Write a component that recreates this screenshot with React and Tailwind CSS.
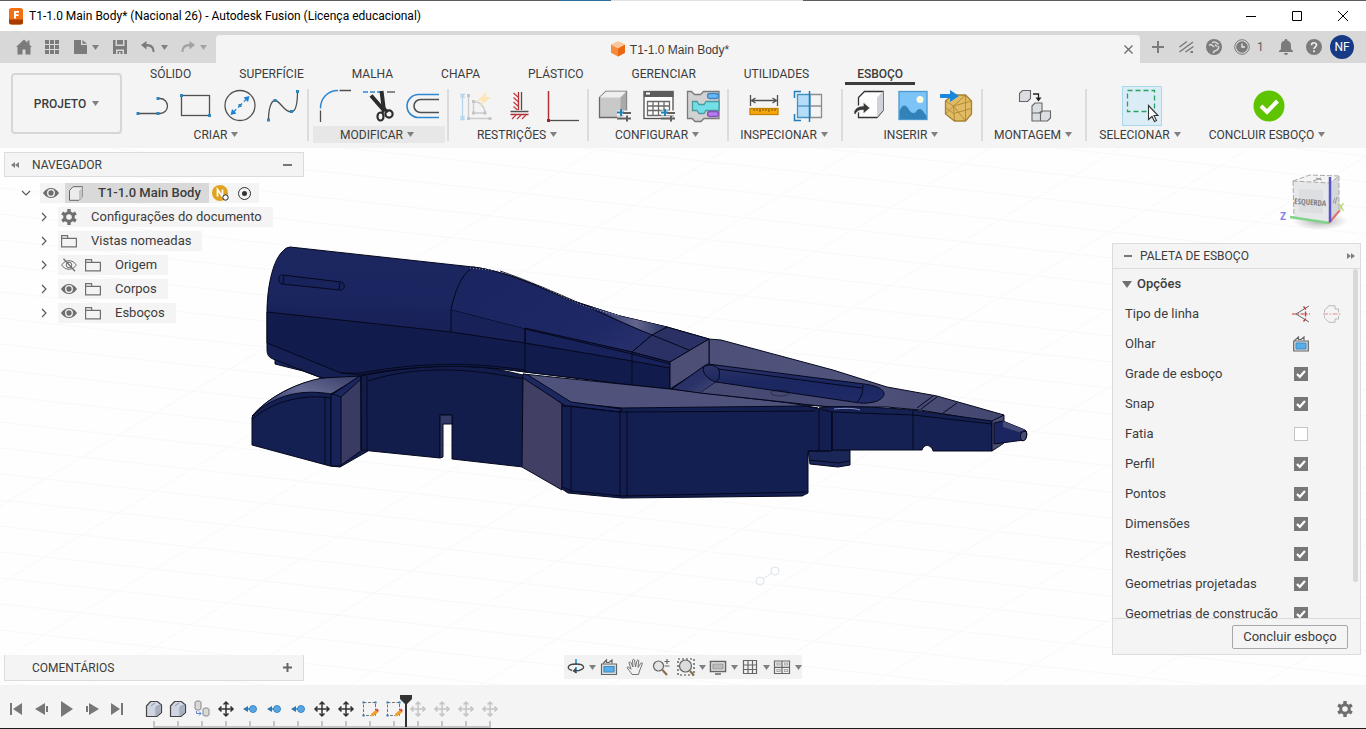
import { useState } from "react";

const Caret = ({ className = "text-[#808080]" }) => (
  <svg width="7" height="5" viewBox="0 0 7 5" className={`shrink-0 ${className}`}>
    <path d="M0 0h7L3.5 5z" fill="currentColor" />
  </svg>
);

const Dots = ({ at, color = "#2e86bd" }) =>
  at.map(([x, y]) => (
    <rect key={`${x}-${y}`} x={x - 1.5} y={y - 1.5} width="3" height="3" fill={color} />
  ));

const Tool = ({ children, size = 34 }) => (
  <svg width={size} height={size} viewBox="0 0 34 34" fill="none" stroke="#505050" strokeWidth="1.3">
    {children}
  </svg>
);

/* ---------- Ribbon icons ---------- */

const LineIcon = () => (
  <Tool>
    <path d="M2 24.500H24a7.500 7.500 0 0 0 0-15H22" />
    <g stroke="none"><Dots at={[[2, 24.5], [22, 24.5], [22, 9.5]]} /></g>
  </Tool>
);

const RectIcon = () => (
  <Tool>
    <rect x="2.500" y="6.500" width="28" height="20" />
    <g stroke="none"><Dots at={[[2.5, 6.5], [30.5, 26.5]]} /></g>
  </Tool>
);

const CircleIcon = () => (
  <Tool>
    <circle cx="17" cy="16.500" r="15" />
    <path d="M9 24.500 25 8.500" stroke="#1f82d8" strokeDasharray="6 2.600 5.600 2.600 6" />
    <path d="m7.500 26 1.500-6 4.500 4.500zM26.500 7l-6 1.500 4.500 4.500z" fill="#1f82d8" stroke="none" />
    <g stroke="none"><Dots at={[[17, 16.5]]} /></g>
  </Tool>
);

const SplineIcon = () => (
  <Tool>
    <path d="M2.500 31C2.500 20 5 11.500 9 11.500c5 0 9 11.500 16 11.500 5 0 6.500-10 6.500-20.500" />
    <g stroke="none"><Dots at={[[2.5, 31], [9, 11.5], [25.5, 22.5], [31.5, 2.5]]} /></g>
  </Tool>
);

const FilletIcon = () => (
  <Tool>
    <path d="M2.500 19.500C2.500 9 10 1.500 20 1.500" stroke="#2e86d0" strokeWidth="1.500" />
    <path d="M21.500 1.500H33M2.500 21.500V33" />
  </Tool>
);

const TrimIcon = () => (
  <Tool>
    <path d="M1 3h18" stroke="#2e86d0" strokeDasharray="5 2" />
    <path d="M25 3h8" />
    <path d="M9 6.500 22.500 22M19.500 2 22 22" stroke="#2c2c2c" strokeWidth="4" />
    <ellipse cx="18.500" cy="27.500" rx="3" ry="4" stroke="#2c2c2c" strokeWidth="2.200" />
    <ellipse cx="27" cy="25" rx="3.600" ry="3.600" stroke="#2c2c2c" strokeWidth="2.200" />
    <path d="m20 24 3-4 3 3" stroke="#2c2c2c" strokeWidth="2.500" />
  </Tool>
);

const OffsetIcon = () => (
  <Tool>
    <path d="M33 5.500H12.500a11.500 11.500 0 0 0 0 23H33" stroke="#2e86d0" strokeWidth="1.600" />
    <path d="M33 10.500H14.500a6.500 6.500 0 0 0 0 13H33" strokeWidth="1.600" />
  </Tool>
);

const AutoConstrainIcon = () => (
  <Tool>
    <g opacity=".38">
      <path d="M4.500 6v23M2 5.500h5M2 30.500h5M2.500 9l2-3 2 3M2.500 27l2 3 2-3" stroke="#4da6e8" />
      <path d="M10.500 6.500v23h22M15.500 12.500v11.500h11.500c0-6-5-11.500-11.500-11.500z" stroke="#8a8a8a" />
      <g stroke="none"><Dots color="#777" at={[[10.5, 6.5], [10.5, 29.5], [32, 29.5], [15.5, 12.5], [15.5, 24], [27, 24]]} /></g>
    </g>
    <path d="M29 2 19 12h6l-4 6 12-10h-6z" fill="#fbe6b4" stroke="none" />
  </Tool>
);

const HorizontalVerticalIcon = () => (
  <Tool>
    <path d="M19.500 3v18M8.500 22.500h18" stroke="#505050" />
    <path d="M16.500 3v18M8.500 25.500h18" stroke="#b03034" />
    <path d="m11.500 4 5 4.500m-5 0 5 4.500m-5 0 5 4.500m-5 0 4 3.500M10 30l4-4m1 4 4-4m1 4 4-4" stroke="#c03a3e" strokeWidth="1.200" />
  </Tool>
);

const CoincidentIcon = () => (
  <Tool>
    <path d="M2.500 2v28" stroke="#b03034" strokeWidth="1.500" />
    <path d="M4 31.500h29" />
    <rect x="1" y="30" width="3" height="3" fill="#a02529" stroke="none" />
  </Tool>
);

const PlusBars = ({ x = 19, y = 20 }) => (
  <g transform={`translate(${x} ${y})`} strokeWidth="2">
    <path d="M0 4h14M0 10h14" stroke="#f4f4f4" strokeWidth="5" />
    <path d="M6 4h8M0 9.500h14M10 6.500v6" stroke="#606060" />
    <path d="M0 3.500h7M4 0v7" stroke="#1f82b8" />
  </g>
);

const ConfigBodyIcon = () => (
  <Tool>
    <path d="M1.500 8.500 8 2.500h20.500v20l-6 6h-21z" fill="#c9c9c9" stroke="#6a6a6a" />
    <path d="M1.500 8.500 8 2.500h20.500l-6 6z" fill="#efefef" stroke="none" />
    <path d="m22.500 8.500 6-6v20l-6 6z" fill="#a9a9a9" stroke="none" />
    <PlusBars />
  </Tool>
);

const ConfigTableIcon = () => (
  <Tool>
    <rect x="2" y="2.500" width="29" height="27" fill="#fff" />
    <path d="M2 2h29.500v6H2z" fill="#5d5d5d" stroke="none" />
    <path d="M5.500 12.500h22v14h-22zM5.500 17h22M5.500 21.500h22M11 12.500v14M16.500 12.500v14M22 12.500v14" stroke="#6a6a6a" />
    <path d="M4 4.500h4" stroke="#fff" strokeWidth="2" />
    <PlusBars />
  </Tool>
);

const ConfigRuleIcon = () => (
  <Tool>
    <path d="M1.500 2.500h4l3 3h6l3-3H33v27H18l-3 3H9l-3-3H1.500z" fill="#d2d2d2" stroke="#7a7a7a" />
    <path d="M6.500 12.500H11l2 3h5l2-3h13v9H20l-2 3h-5l-2-3H6.500z" fill="#72dfe6" stroke="#4c9aa0" />
    <rect x="21.500" y="4.500" width="11" height="5" rx="2.500" fill="#69b8f5" stroke="#3f87c0" />
    <rect x="21.500" y="22.500" width="11" height="5" rx="2.500" fill="#b77bf0" stroke="#8550b8" />
  </Tool>
);

const MeasureIcon = () => (
  <Tool>
    <path d="M3.500 6v11M30.500 6v11M5 11.500h24M8.500 9l-4 2.500 4 2.500M25.500 9l4 2.500-4 2.500" />
    <rect x="3" y="19.500" width="28" height="6" fill="#f5a70d" stroke="#c98200" />
    <path d="M7 20v2m3-2v2m3-2v3m3-3v2m3-2v2m3-2v3m3-3v2m3-2v2" stroke="#7a5200" strokeWidth="1" />
  </Tool>
);

const SectionIcon = () => (
  <Tool>
    <path d="M6.500 5.500H19v23H6.500z" fill="#b5dcf8" stroke="#4593c4" />
    <path d="M6.500 17h12" stroke="#4593c4" />
    <path d="M19 5.500h11.500v23H19M19 17h11.500" stroke="#8d8d8d" />
    <path d="M18.500 2v31M10 2.500H3.500V9M10 31.500H3.500V25" stroke="#1f7cb8" strokeWidth="1.500" />
  </Tool>
);

const InsertDeriveIcon = () => (
  <Tool>
    <path d="m6.500 8.500 6-6H31v19l-6 7H6.500z" fill="#fdfdfd" stroke="#333" />
    <path d="m25 8.500 6-6v19l-6 7z" fill="#cfd2d8" stroke="none" />
    <path d="M1.500 24.500c0-5 4-8 9.500-8v-4l7.500 6.500-7.500 6.500v-4c-3.500 0-6 .5-7.500 5z" fill="#3a3a3a" stroke="#f4f4f4" />
  </Tool>
);

const CanvasIcon = () => (
  <Tool>
    <rect x="3" y="2.500" width="28" height="28" fill="#7cc4f8" stroke="#4a9bd0" />
    <path d="M3.500 22c3-7 6-7 9-2 2 3 3 4 5 4 3 0 3-4 6-4s4 3 7 7v3H3.500z" fill="#3282b8" stroke="none" />
    <circle cx="24" cy="10.500" r="3.500" fill="#fffbe0" stroke="none" />
  </Tool>
);

const InsertMeshIcon = () => (
  <Tool>
    <path d="m5.500 12 7-6h13l6 6v13l-6 7h-11l-9-7z" fill="#e0bb63" stroke="#a8822e" />
    <path d="m5.500 12 8 5 18-5M13.500 17l1 15M13.500 17l12-11M13.500 17l12 15M25.500 6v26M5.500 18.500l8 6 18-5M5.500 25l8-8" stroke="#a8822e" strokeWidth=".8" />
    <path d="M0 5h10V1l9 6-9 6V9H0z" fill="#1a86dc" stroke="none" />
  </Tool>
);

const AssembleIcon = () => (
  <Tool>
    <g fill="#dadde1" stroke="#666" strokeWidth="1.100">
      <path d="m1.500 4.500 3-3h8v8l-3 3h-8z" />
      <path d="m14 17 3-3h7v8l-3 2h-7zM14 24h8.500v8H14zM22.500 24l2-2h8v7l-3 3h-7z" />
    </g>
    <path d="M15 5h5.500v5" stroke="#222" />
    <path d="M17.500 8.500h6l-3 4z" fill="#222" stroke="none" />
  </Tool>
);

const SelectIcon = () => (
  <Tool>
    <rect x="2.500" y="1.500" width="27" height="21" stroke="#27a060" strokeDasharray="5 3" />
    <path d="M23.500 16.500v14l3.500-3 2.500 5 2-1-2.500-5h4z" fill="#fff" stroke="#333" strokeWidth="1.100" />
  </Tool>
);

const FinishIcon = () => (
  <Tool>
    <circle cx="17" cy="17" r="15.500" fill="#5fc400" stroke="none" />
    <path d="m9 17 6 6 10.500-11" stroke="#fff" strokeWidth="4" />
  </Tool>
);

const tabs = ["SÓLIDO", "SUPERFÍCIE", "MALHA", "CHAPA", "PLÁSTICO", "GERENCIAR", "UTILIDADES", "ESBOÇO"];

const groups = [
  { name: "CRIAR", width: "w-[182px]", icons: [LineIcon, RectIcon, CircleIcon, SplineIcon], divider: true },
  { name: "MODIFICAR", width: "w-[140px]", icons: [FilletIcon, TrimIcon, OffsetIcon], divider: true, hover: true },
  { name: "RESTRIÇÕES", width: "w-[140px]", icons: [AutoConstrainIcon, HorizontalVerticalIcon, CoincidentIcon], divider: true },
  { name: "CONFIGURAR", width: "w-[140px]", icons: [ConfigBodyIcon, ConfigTableIcon, ConfigRuleIcon], divider: true },
  { name: "INSPECIONAR", width: "w-[114px]", icons: [MeasureIcon, SectionIcon], divider: true },
  { name: "INSERIR", width: "w-[140px]", icons: [InsertDeriveIcon, CanvasIcon, InsertMeshIcon], divider: true },
  { name: "MONTAGEM", width: "w-[104px]", icons: [AssembleIcon], divider: true },
  { name: "SELECIONAR", width: "w-[110px]", icons: [SelectIcon], active: true },
  { name: "CONCLUIR ESBOÇO", width: "w-[144px]", icons: [FinishIcon] },
];

/* ---------- Title bar and quick access ---------- */

const TitleBar = () => (
  <header className="shrink-0 bg-white">
    <div className="flex h-px bg-[#5c5c5c]">
      <span className="ml-[41%] w-[51px] bg-[#2f6f9f]" />
      <span className="w-[192px] bg-[#e2e2e2]" />
    </div>
    <div className="flex h-[30px] items-center pl-2">
      <svg width="16" height="17" viewBox="0 0 16 17">
        <rect x="1" y="0" width="14" height="16.500" rx="2.500" fill="#f2700f" />
        <path d="M1 11.500h14V14a2.500 2.500 0 0 1-2.500 2.500h-9A2.500 2.500 0 0 1 1 14z" fill="#a83c00" />
        <path d="M6 3h5v1.800H8v1.400h2.500V8H8v2.500H6z" fill="#fff" />
      </svg>
      <h1 className="ml-[5px] flex-1 truncate text-[12px] text-black">
        T1-1.0 Main Body* (Nacional 26) - Autodesk Fusion (Licença educacional)
      </h1>
      {[
        ["Minimizar", "M0 5.500h10"],
        ["Maximizar", "M.5.5h9v9h-9z"],
        ["Fechar", "m0 0 10 10M10 0 0 10"],
      ].map(([label, d]) => (
        <button key={label} aria-label={label} className="flex h-full w-[46px] items-center justify-center">
          <svg width="10" height="10" viewBox="0 0 10 10" fill="none" stroke="#000" className="overflow-visible"><path d={d} /></svg>
        </button>
      ))}
    </div>
  </header>
);

const Glyph = ({ children, className = "" }) => (
  <svg width="16" height="16" viewBox="0 0 16 16" fill="currentColor" className={`shrink-0 ${className}`}>{children}</svg>
);

const QuickBar = () => (
  <div className="flex h-8 shrink-0 bg-[#d8d8d8] text-[#7b7b7b]">
    <div className="flex items-center pl-[10px]">
      <button aria-label="Início" className="flex w-7 justify-center">
        <Glyph><path d="M8 .5 0 8h1.500v7.500h5v-5h3v5h5V8H16l-2.500-2.300V1.500h-2v2.200z" /></Glyph>
      </button>
      <button aria-label="Painel de dados" className="flex w-7 justify-center">
        <Glyph><path d="M1 1h4v4H1zM6 1h4v4H6zM11 1h4v4h-4zM1 6h4v4H1zM6 6h4v4H6zM11 6h4v4h-4zM1 11h4v4H1zM6 11h4v4H6zM11 11h4v4h-4z" /></Glyph>
      </button>
      <button aria-label="Arquivo" className="flex w-10 items-center gap-[3px] pl-[7px]">
        <Glyph><path d="M1 1h7v5h6v9H1zM9.500 1 14 4.800H9.500z" /></Glyph><Caret />
      </button>
      <button aria-label="Salvar" className="flex w-7 justify-center">
        <Glyph><path d="M1 1h2.500v6h9V1H15v14h-3v-4.500H4V15H1zM5 1h6v4.500H5zM5.500 12h5v3h-2v-2H7v2H5.500z" /></Glyph>
      </button>
      <button aria-label="Desfazer" className="flex w-10 items-center gap-1 pl-[7px]">
        <Glyph><path d="M5.500 2v3C11 5 13.500 7.500 13.500 13h-2c0-4-2-5.500-6-5.500v3L0 6z" /></Glyph><Caret />
      </button>
      <button aria-label="Refazer" className="flex w-[42px] items-center gap-1 pl-[6px] text-[#a3a3a3]">
        <Glyph><path d="M9.500 2v3C4 5 1.500 7.500 1.500 13h2c0-4 2-5.500 6-5.500v3L15 6z" /></Glyph>
        <Caret className="text-[#a3a3a3]" />
      </button>
    </div>

    <div className="mt-1 flex flex-1 items-center rounded-t bg-[#f4f4f4] pl-2 text-[#3c3c3c]">
      <div className="flex flex-1 items-center justify-center gap-[5px] font-['Liberation_Sans',Arial,sans-serif] text-[12px]">
        <svg width="14" height="16" viewBox="0 0 15 16">
          <path d="M7.500 0 15 3.500v8.500l-7.500 4L0 12V3.500z" fill="#f58b3c" />
          <path d="M7.500 0 15 3.500 7.500 7.500 0 3.500z" fill="#fcc79a" />
          <path d="M7.500 7.500 15 3.500v8.500l-7.500 4z" fill="#e8690f" />
        </svg>
        <span className="pt-px">T1-1.0 Main Body*</span>
      </div>
      <button aria-label="Fechar documento" className="flex w-6 justify-center text-[#6b6b6b]">
        <svg width="9" height="9" viewBox="0 0 9 9" stroke="currentColor" strokeWidth="1.300"><path d="m.5.5 8 8M8.500.5l-8 8" /></svg>
      </button>
    </div>

    <div className="flex items-center pl-1 pr-3">
      <button aria-label="Novo desenho" className="flex w-7 justify-center">
        <Glyph><path d="M7 2h2v5h5v2H9v5H7V9H2V7h5z" /></Glyph>
      </button>
      <button aria-label="Extensões" className="flex w-7 justify-center">
        <Glyph><path d="M1 7.500 8.500 2l.9 1.100L2 8.600zM1 12.500 14.500 2.500l.9 1.100L2 13.600zM7 12.500l8-5.500.9 1.100L8 13.600zM12.500 12h2.500v2h-2.500z" /></Glyph>
      </button>
      <button aria-label="Atualizações" className="flex w-7 justify-center">
        <Glyph>
          <circle cx="8" cy="8" r="8" />
          <path d="M3 6.500c3-3 3 1.500 5.500 1M6 3.500c2.500-1 5 0 6.500 2M9 5.500l2 2M12.500 7c.5 3-1.500 4.500-4 5l-1.500 2" stroke="#d8d8d8" strokeWidth="1.600" fill="none" />
        </Glyph>
      </button>
      <button aria-label="Status do trabalho: 1" className="flex w-11 items-center gap-[7px] pl-[6px]">
        <Glyph>
          <circle cx="8" cy="8" r="7.300" fill="none" stroke="currentColor" />
          <circle cx="8" cy="8" r="5.800" />
          <path d="M8 4.500V8h3" stroke="#e6e6e6" strokeWidth="1.300" fill="none" />
        </Glyph>
        <span className="text-[12px] text-[#606060]">1</span>
      </button>
      <button aria-label="Notificações" className="flex w-7 justify-center">
        <Glyph><path d="M8 0a1.300 1.300 0 0 1 1.300 1.500C12 2.200 13 4 13 6.500V10l2 2v1H1v-1l2-2V6.500C3 4 4 2.200 6.700 1.500A1.300 1.300 0 0 1 8 0zM6 14h4a2 2 0 0 1-4 0z" /></Glyph>
      </button>
      <button aria-label="Ajuda" className="flex w-[30px] pl-[6px]">
        <Glyph>
          <circle cx="8" cy="8" r="8" />
          <path d="M5.500 6.200C5.500 3 10.500 3 10.500 6c0 1.800-2.500 1.900-2.500 4" fill="none" stroke="#ececec" strokeWidth="1.700" />
          <rect x="7.100" y="11.300" width="1.800" height="1.800" fill="#ececec" />
        </Glyph>
      </button>
      <button className="size-6 rounded-full bg-[#163a86] text-[12px] text-white">NF</button>
    </div>
  </div>
);

const Ribbon = () => {
  const [tab, setTab] = useState("ESBOÇO");

  return (
    <div className="flex h-[85px] shrink-0 bg-[#f4f4f4]">
      <button className="ml-[11px] mt-[10px] flex h-[61px] w-[111px] items-center justify-center gap-[6px] rounded border-2 border-[#d6d6d6] text-[12px] font-medium">
        PROJETO <Caret />
      </button>

      <div className="min-w-0 flex-1 pl-[5px]">
        <nav className="ml-[11px] flex gap-6 text-[12px]">
          {tabs.map((name) => (
            <button
              key={name}
              onClick={() => setTab(name)}
              className={`h-[22px] border-b-3 px-3 pt-1 leading-[15px] ${tab === name ? "border-[#3c3c3c] font-medium" : "border-transparent"}`}
            >
              {name}
            </button>
          ))}
        </nav>
        <div className="mt-px flex">
          {groups.map((group) => (
            <div key={group.name} className={`relative flex shrink-0 flex-col px-1 ${group.width}`}>
              <div className="flex h-10 justify-center">
                {group.icons.map((Icon, i) => (
                  <button
                    key={i}
                    aria-label={`${group.name} ${i + 1}`}
                    className={`flex items-center justify-center ${group.active ? "w-10 border border-[#a9d8ea] bg-[#daedf6]" : "w-11"}`}
                  >
                    <Icon />
                  </button>
                ))}
              </div>
              <button className={`flex h-[17px] items-center justify-center gap-1 pr-1 text-[12px] whitespace-nowrap ${group.hover ? "bg-[#e7e7e7]" : ""}`}>
                {group.name} <Caret />
              </button>
              {group.divider && <span className="absolute top-[3px] right-0 h-[52px] w-[2px] bg-[#dcdcdc]" />}
            </div>
          ))}
        </div>
      </div>
    </div>
  );
};

/* ---------- Browser tree ---------- */

const EyeIcon = ({ off }) => (
  <svg width="16" height="14" viewBox="0 0 16 14" fill="none" stroke="#6f6f6f">
    {off ? (
      <>
        <path d="M.7 7C4 1.300 12 1.300 15.300 7 12 12.700 4 12.700.7 7z" />
        <circle cx="8" cy="7" r="2.800" />
        <path d="m2.500.8 11.500 12.500" strokeWidth="1.300" />
      </>
    ) : (
      <>
        <path d="M.5 7C4 1 12 1 15.500 7 12 13 4 13 .5 7z" fill="#6f6f6f" />
        <circle cx="8" cy="7" r="3.300" fill="#6f6f6f" stroke="#f4f4f4" strokeWidth="1.300" />
      </>
    )}
  </svg>
);

const FolderIcon = () => (
  <svg width="16" height="14" viewBox="0 0 16 14" fill="none" stroke="#6f6f6f" strokeWidth="1.200">
    <path d="M.6 1.600h6v2.800h8.800v8.500H.6zM.6 4.400h6" />
  </svg>
);

const GearIcon = ({ size = 16 }) => (
  <svg width={size} height={size} viewBox="0 0 16 16" fill="none" stroke="#6f6f6f">
    <circle cx="8" cy="8" r="4.300" strokeWidth="3" />
    <path d="M8 0v3M8 13v3M1.100 4l2.600 1.500M12.300 10.500l2.600 1.500M1.100 12l2.600-1.500M12.300 5.500 14.900 4" strokeWidth="3.400" />
  </svg>
);

const Chevron = ({ down }) => (
  <svg width="10" height="10" viewBox="0 0 10 10" fill="none" stroke="#5a5a5a" strokeWidth="1.200">
    <path d={down ? "M1 3l4 4 4-4" : "M3 1l4 4-4 4"} />
  </svg>
);

const nodes = [
  { label: "Configurações do documento", icon: "gear" },
  { label: "Vistas nomeadas", icon: "folder" },
  { label: "Origem", icon: "folder", eye: "off" },
  { label: "Corpos", icon: "folder", eye: "on" },
  { label: "Esboços", icon: "folder", eye: "on" },
];

const Navigator = () => (
  <section className="text-[13px]">
    <div className="flex h-[25px] items-center border border-[#dcdcdc] bg-[#f4f4f4] pl-[6px] pr-[11px]">
      <svg width="8" height="6" viewBox="0 0 8 6" fill="#808080"><path d="M4 0v6L0 3zM8 0v6L4 3z" /></svg>
      <h2 className="ml-[13px] flex-1 text-[12px]">NAVEGADOR</h2>
      <button aria-label="Recolher navegador" className="h-[2px] w-[9px] bg-[#777]" />
    </div>
    <ul className="pt-1">
      <li className="flex h-6 items-center pl-[17px]">
        <button aria-label="Recolher" className="flex w-[19px] items-center"><Chevron down /></button>
        <div className="flex h-5 items-center bg-[#f4f4f4] pr-2">
          <span className="flex w-[25px] pl-[3px]"><EyeIcon /></span>
          <span className="flex h-5 items-center gap-[15px] bg-[#d9d9d9] pl-1 pr-2 font-medium">
            <svg width="14" height="15" viewBox="0 0 14 15" fill="none" stroke="#666">
              <path d="M.5 4.500 4 .7h9.500v10L10 14.300H.5z" fill="#ececec" />
              <path d="m10 5 3.500-4v10L10 14.300z" fill="#c4c4c4" stroke="none" />
            </svg>
            T1-1.0 Main Body
          </span>
          <svg width="18" height="18" viewBox="0 0 18 18" className="ml-[3px]">
            <circle cx="8" cy="9" r="8" fill="#dfa31f" />
            <path d="M5.500 12.500v-7l5 7v-7" fill="none" stroke="#fff" strokeWidth="1.700" />
            <circle cx="13.500" cy="13.500" r="2.700" fill="#fff" stroke="#222" />
          </svg>
          <input type="radio" name="active" aria-label="Ativar componente" defaultChecked className="ml-2 grid size-[13px] appearance-none place-items-center rounded-full border border-[#333] before:size-[5px] before:rounded-full before:bg-[#333]" />
        </div>
      </li>
      {nodes.map((node) => (
        <li key={node.label} className="flex h-6 items-center pl-[35px]">
          <button aria-label={`Expandir ${node.label}`} className="flex w-[19px] items-center"><Chevron /></button>
          <div className="flex h-5 items-center bg-[#f4f4f4]">
            {node.eye && <span className="flex w-6 pl-[3px]"><EyeIcon off={node.eye === "off"} /></span>}
            <span className="flex w-[22px] justify-center">{node.icon === "gear" ? <GearIcon /> : <FolderIcon />}</span>
            <span className="px-[11px]">{node.label}</span>
          </div>
        </li>
      ))}
    </ul>
  </section>
);

/* ---------- Sketch palette ---------- */

const LookAtIcon = () => (
  <svg width="16" height="16" viewBox="0 0 16 16" fill="none" stroke="#666" strokeWidth="1.200">
    <path d="M1.500 4.500 5.500 1v2.500H8L11 1v3.500" />
    <path d="M.7 5h14.600v10H.7z" fill="#dedede" />
    <path d="M3 7h10v6H3z" fill="#58aeea" stroke="#3d8cc4" strokeWidth="1" />
  </svg>
);

const options = [
  ["Grade de esboço", true],
  ["Snap", true],
  ["Fatia", false],
  ["Perfil", true],
  ["Pontos", true],
  ["Dimensões", true],
  ["Restrições", true],
  ["Geometrias projetadas", true],
  ["Geometrias de construção", true],
];

const SketchPalette = () => (
  <section className="mt-[11px] mb-[30px] mr-[5px] flex min-h-0 w-[249px] flex-1 flex-col border border-[#dcdcdc] bg-[#f4f4f4] text-[13px]">
    <div className="flex h-[25px] shrink-0 items-center border-b border-[#dcdcdc] pl-[11px] pr-[5px]">
      <button aria-label="Recolher paleta" className="h-[2px] w-2 bg-[#777]" />
      <h2 className="ml-2 flex-1 text-[12px]">PALETA DE ESBOÇO</h2>
      <svg width="8" height="6" viewBox="0 0 8 6" fill="#808080"><path d="M0 0v6l4-3zM4 0v6l4-3z" /></svg>
    </div>
    <div className="relative min-h-0 flex-1 overflow-hidden">
      <h3 className="flex h-[30px] items-center gap-[5px] pl-[9px] font-medium">
        <svg width="10" height="7" viewBox="0 0 10 7" fill="#6f6f6f"><path d="M0 0h10L5 7z" /></svg>
        Opções
      </h3>
      <div className="flex h-[30px] items-center pl-3 pr-3">
        <span className="flex-1">Tipo de linha</span>
        <button aria-label="Construção" className="flex w-[30px] justify-center">
          <svg width="18" height="18" viewBox="0 0 18 18" fill="none">
            <path d="m17 1-13 8 13 8" stroke="#666" />
            <path d="M0 9h18" stroke="#c8343a" strokeDasharray="4 1.500 1.500 1.500" />
            <path d="m11.500 1.500 2.500 3M11.500 16.500l2.500-3M13.500 6.500v5" stroke="#c8343a" strokeWidth="1.300" />
          </svg>
        </button>
        <button aria-label="Linha de centro" className="flex w-8 justify-center">
          <svg width="18" height="18" viewBox="0 0 18 18" fill="none">
            <path d="M1.500 7.500V5L6 .7h6V4h3.500v3.500M1.500 10.500V13L6 17.300h6V14h3.500v-3.500" stroke="#b9b9b9" />
            <path d="M0 9h18" stroke="#dc8f93" strokeDasharray="5 1.500 1.500 1.500" />
          </svg>
        </button>
      </div>
      <div className="flex h-[30px] items-center pl-3 pr-11">
        <span className="flex-1">Olhar</span>
        <button aria-label="Olhar" className="flex w-[30px] justify-center"><LookAtIcon /></button>
      </div>
      {options.map(([label, on]) => (
        <label key={label} className="flex h-[30px] items-center pl-3 pr-[52px]">
          <span className="flex-1">{label}</span>
          <span className="grid size-[14px] place-items-center">
            <input type="checkbox" defaultChecked={on} className="peer col-start-1 row-start-1 size-[14px] appearance-none border border-[#c4c4c4] bg-white checked:border-[#777] checked:bg-[#777]" />
            <svg width="10" height="10" viewBox="0 0 10 10" className="pointer-events-none invisible col-start-1 row-start-1 peer-checked:visible">
              <path d="m1 5 2.800 2.800L9 2" fill="none" stroke="#fff" strokeWidth="2.200" />
            </svg>
          </span>
        </label>
      ))}
      <span className="absolute top-0 right-[2px] h-[313px] w-[5px] rounded-full bg-[#d8d8d8]" />
    </div>
    <div className="flex h-9 shrink-0 items-center justify-end border-t border-[#dcdcdc] pr-3">
      <button className="h-6 w-[116px] rounded-xs border border-[#a8a8a8]">Concluir esboço</button>
    </div>
  </section>
);

/* ---------- Viewport ---------- */

const ViewCube = () => (
  <svg width="74" height="64" viewBox="1277 168 74 64" className="mt-5 mr-[15px] shrink-0">
    <defs>
      <radialGradient id="cubeShade"><stop offset="0" stopColor="#888" stopOpacity=".7" /><stop offset="1" stopColor="#999" stopOpacity="0" /></radialGradient>
    </defs>
    <ellipse cx="1320" cy="221" rx="28" ry="9" fill="url(#cubeShade)" />
    <path d="M1293 181l17-6 29 1-9 7z" fill="#f4f4f4" />
    <path d="M1293 181l37 2-1 40-35-4z" fill="#e6e7e9" />
    <path d="M1330 183l9-7v34l-10 13z" fill="#d5d6da" />
    <path d="M1299 189l24 1v24l-24-2z" fill="#dcdee1" />
    <path d="M1293 181l17-6 29 1-9 7zM1293 181l1 38M1339 176v34" fill="none" stroke="#a9a9a9" strokeDasharray="5 2" />
    <path d="m1313 181 8-3m-5 0 6 2" stroke="#999" />
    <path d="M1290 217l39 6" stroke="#7fd48a" strokeWidth="2.500" />
    <path d="M1329 223l11-13" stroke="#e0706c" strokeWidth="2" />
    <path d="M1330 177v45" stroke="#5654c8" strokeWidth="2.500" />
    <path d="m1333 203 2-5m0 6 2-7" stroke="#999" />
    <text x="1294" y="204" fontSize="8" fill="#7f8285" transform="rotate(4 1294 204)" fontFamily="Open Sans Condensed, Roboto Condensed, Roboto">ESQUERDA</text>
    <text x="1280" y="220" fontSize="10" fontWeight="700" fill="#8280ea">Z</text>
    <text x="1338" y="211" fontSize="10" fill="#b4cf5a">X</text>
  </svg>
);

const gridDown = Array.from({ length: 34 }, (_, i) => -120 + i * 26);
const gridUp = Array.from({ length: 16 }, (_, i) => -300 + i * 130);

const Model = () => (
  <svg viewBox="0 148 1366 537" preserveAspectRatio="xMidYMid slice" className="absolute inset-0 size-full">
    <defs>
      <linearGradient id="cover" x1="0" y1="0" x2="-.12" y2="1">
        <stop offset="0" stopColor="#1c2760" />
        <stop offset=".3" stopColor="#1b2660" />
        <stop offset=".5" stopColor="#182158" />
        <stop offset="1" stopColor="#161f50" />
      </linearGradient>
      <linearGradient id="spine" x1="0" y1="0" x2="1" y2=".6">
        <stop offset="0" stopColor="#1a2560" />
        <stop offset=".8" stopColor="#1d2864" />
        <stop offset="1" stopColor="#262f69" />
      </linearGradient>
      <linearGradient id="ridge" x1="0" y1="0" x2="1" y2="0">
        <stop offset="0" stopColor="#2a3268" />
        <stop offset=".6" stopColor="#62668e" />
        <stop offset="1" stopColor="#2b3264" />
      </linearGradient>
      <linearGradient id="podTop" x1="0" y1="1" x2="1" y2="0">
        <stop offset="0" stopColor="#1b2560" />
        <stop offset=".55" stopColor="#666b94" />
        <stop offset="1" stopColor="#343964" />
      </linearGradient>
      <linearGradient id="lightTop" x1="0" y1="0" x2="1" y2="0">
        <stop offset="0" stopColor="#4b4f78" />
        <stop offset=".5" stopColor="#50547c" />
        <stop offset="1" stopColor="#43476f" />
      </linearGradient>
      <linearGradient id="cockpit" x1="0" y1="0" x2=".1" y2="1">
        <stop offset="0" stopColor="#2e3567" />
        <stop offset=".5" stopColor="#1b2761" />
        <stop offset="1" stopColor="#1f2a66" />
      </linearGradient>
      <linearGradient id="cockpitWall" x1="0" y1="0" x2="1" y2="1">
        <stop offset="0" stopColor="#232c64" />
        <stop offset=".6" stopColor="#2b3369" />
        <stop offset="1" stopColor="#474b74" />
      </linearGradient>
    </defs>

    <g stroke="#f8f8f9">
      {gridDown.map((y) => <path key={y} d={`M0 ${y + 100}L1366 ${y + 250}`} />)}
      {gridUp.map((x) => <path key={x} d={`M${x} 685L${x + 900} 148`} />)}
    </g>

    <g strokeLinejoin="round" stroke="#05081c" strokeWidth="1">
      {/* floor block behind the front wheel cut-out */}
      <path d="M808 450h42v15l-12 2-28-3z" fill="#1b2658" />
      <path d="M810 460l28 3 12-2" fill="none" />

      {/* side pod front */}
      <path d="M252 417c14-18 42-34 70-38l20-4 32 2-6 74-28 16-10-1-78-21z" fill="#152052" />
      <path d="M252 416c16-19 44-33 70-38l22-3 17 1-30 18c-28-5-56 0-79 22z" fill="url(#podTop)" />
      <path d="M252 420c20-20 56-26 78-22M325 396v68M331 396v70M340 397v69M332 396l8-1" fill="none" />
      <path d="M340 397l21-20 1 73-22 16z" fill="#393b62" />
      <path d="M331 394l5-2 5 4v70l-10 0z" fill="#18235a" />
      <path d="M331 394l5-2 25-17v4l-20 18-5-2z" fill="#1c2760" />

      {/* side pod middle */}
      <path d="M361 376c60-18 110-14 162-1v92l-71-8v-44h-12v43l-79-8z" fill="#131d4c" />
      <path d="M443 424v33l-3 1v-43h12v9z" fill="#343a66" />
      <path d="M367 376v74M361 376v74M368 381c50-16 100-13 155-2" fill="none" />

      {/* engine cover */}
      <path d="M275 358V364L303 371L322 378L341 376Z" fill="#1a2560" />
      <path
        d="M290 247L473 267C513 272 553 294 573 301L620 316L667 327L709 339V366L670 389L632 385L525 372C470 364 420 364 361 376L322 378L273 359Q267 357 267 350V312C267 290 272 262 282 252Q286 247 290 247Z"
        fill="url(#cover)"
      />
      <path d="M473 267C513 272 553 294 573 301L620 316L667 327L652 335L632 352L525 329L451 310C454 295 460 275 473 267Z" fill="url(#spine)" />
      <path d="M451 310L525 329V343L451 332Z" fill="#182258" stroke="none" />
      <path d="M267 312L451 332L525 343L670 366V389L632 385L525 372C470 364 420 364 361 375L341 373L267 343Z" fill="#121c4c" />
      <path d="M525 328L632 352L670 362V368L632 361L525 343Z" fill="#18225a" />
      <path d="M525 329L632 354L670 364M525 328V372M632 352V385M451 310V332M341 373L361 373C420 362 470 362 525 370" fill="none" />
      <path d="M590 306L620 316L667 327L652 335L620 321Z" fill="url(#ridge)" stroke="none" />
      <path d="M632 352L652 335L667 327L709 339L670 362Z" fill="#2b3164" />
      <path d="M500 271C560 292 600 314 652 335L689 350" fill="none" />
      <path d="M470 268L500 271C540 283 560 297 590 308L620 316" fill="none" stroke="#9aa0b4" strokeDasharray="1 2" />

      {/* NACA slot */}
      <path d="M283 275L341 282C346 283 345 291 340 290L282 284C277 283 278 274 283 275Z" fill="#19235b" />
      <path d="M284 276L283 283M340 283L339 289" fill="none" />

      {/* chassis top, cockpit opening and nose */}
      <path d="M709 339L721 340L833 370L887 387L937 396L1004 415L992 422L920 410L887 407L836 407L786 404L671 389L709 364Z" fill="url(#lightTop)" />
      <path d="M523 374L670 389L790 403L818 408L622 410L562 402Z" fill="#4f537b" />
      <path d="M670 362L709 339V364L670 389Z" fill="#4d4f76" />
      <path d="M672 389L704 366L716 382L700 393Z" fill="url(#cockpitWall)" />
      <path d="M700 393L718 381L858 401L868 405L830 406Z" fill="#474b74" stroke="none" />
      <path d="M708 364L864 384C880 386 885 391 884 395C881 402 868 405 853 402L716 382C706 379 701 371 704 366Z" fill="url(#cockpit)" />
      <path d="M704 367C706 364 716 364 719 370C720 376 719 380 716 382M863 385C863 393 861 398 857 402M700 393L830 407M718 369L862 388" fill="none" />
      <ellipse cx="780" cy="393" rx="9" ry="3" fill="none" opacity=".4" />
      <path d="M917 408l16-12M921 409l16-12M943 413l14-10" fill="none" />

      {/* side pod rear */}
      <path d="M523 376L562 404V490L522 467Z" fill="#413f63" />
      <path d="M562 404C564 401 568 402 571 403L622 408L806 406L832 412V451H808V493L802 496L622 498L568 493L562 489Z" fill="#141f51" />
      <path d="M523 374L528 375L571 402L622 409L620 412L566 406L523 378Z" fill="#1d2860" />
      <path d="M571 405V492M562 406L571 406L620 412L815 411M620 409V497M627 411V496M562 487L572 491L622 496L806 492M819 408V450M808 451H830" fill="none" />

      {/* nose side */}
      <path d="M819 408C830 405 880 407 913 410L992 421V451H933C932 446 925 442 922 450H832V412Z" fill="#152053" />
      <path d="M832 412L913 415L992 424M913 410V450M832 412V451" fill="none" />
      <path d="M992 421L1004 415V443L992 451Z" fill="#4a4d74" />
      <path d="M994 423L1003 421L1025 430C1028 432 1027 439 1024 440L994 444Z" fill="#1b2660" />
      <path d="M1003 421L1025 430L1019 432L1003 427Z" fill="#474b78" stroke="none" />
      <path d="M1022 432C1020 435 1020 438 1022 441L1025 440C1027 437 1027 433 1026 431Z" fill="#4a4d74" />
      <path d="M834 409C844 408 854 408 860 410" stroke="#8b93c8" fill="none" />
    </g>

    {/* preview sketch line */}
    <g fill="none" stroke="#dbe5ea">
      <circle cx="760" cy="581" r="4" />
      <circle cx="775" cy="571" r="4" />
      <path d="m763 579 9-6" />
    </g>
  </svg>
);

const NavTool = ({ label, caret, children }) => (
  <button aria-label={label} className={`flex h-6 items-center gap-1 ${caret ? "w-8 pl-[3px]" : "w-[26px] justify-center"}`}>
    <svg width="18" height="18" viewBox="0 0 18 18" fill="none" stroke="#666" strokeWidth="1.200" className="shrink-0">{children}</svg>
    {caret && <Caret />}
  </button>
);

const NavBar = () => (
  <div className="mb-[6px] flex h-6 self-end bg-[#f2f2f2]">
    <NavTool label="Órbita" caret>
      <path d="M9 1v16" stroke="#4aa3df" strokeWidth="2" strokeDasharray="6 2" />
      <path d="M5 12.500C-1 11 0 6 9 6s10 5 3 6.500l-5 .3M9 10.500 6.500 13l3 2" stroke="#444" strokeWidth="1.300" />
    </NavTool>
    <NavTool label="Olhar">
      <path d="M3 5.500 6.500 2v2.500H9L12 2v3.500" />
      <path d="M1.500 6h15v10.500h-15z" fill="#dedede" />
      <path d="M4 8.500h10v5.500H4z" fill="#58aeea" stroke="#3d8cc4" />
    </NavTool>
    <NavTool label="Pan">
      <path d="M6 16.500C4 13 2 11.500 1 9.500c1-1 2.500 0 4 1.800L3 4.500c.5-1 1.500-.8 2 .2L7 9 6.500 2c.7-1 1.700-.8 2 0L9.500 9l1.500-6.500c.7-1 1.700-.6 1.800.4L12 9.500 15 5c1-.7 1.800 0 1.300 1L13.500 13l-1 3.500z" strokeWidth=".9" />
    </NavTool>
    <NavTool label="Zoom">
      <circle cx="6.500" cy="8" r="5" fill="#e4e4e4" />
      <path d="m10.500 12 4.500 5" stroke="#8a6a48" strokeWidth="2" />
      <path d="M15 1v5M12.500 3.500h5M12.500 8h5" />
    </NavTool>
    <NavTool label="Ajustar" caret>
      <rect x="1" y="1" width="16" height="16" stroke="#444" strokeDasharray="2 2" />
      <circle cx="8.500" cy="8" r="6" fill="#dcdcdc" />
      <path d="m13 13 4 4.500" stroke="#8a6a48" strokeWidth="2" />
    </NavTool>
    <NavTool label="Configurações de exibição" caret>
      <path d="M1.500 3.500h15v10h-15zM6 16h6" strokeWidth="1.500" />
      <path d="M4 6h10v5H4z" fill="#bdbdbd" stroke="#999" />
    </NavTool>
    <NavTool label="Grade e snaps" caret>
      <path d="M2.500 2.500h13v13h-13zM7 2.500v13M11.500 2.500v13M2.500 7h13M2.500 11.500h13" />
    </NavTool>
    <NavTool label="Janelas de visualização" caret>
      <path d="M1.500 3h15v12.500h-15zM9 3v12.500M1.500 9.300h15" />
      <path d="M4 5h3v2H4zM11.500 5h3v2h-3zM4 11.500h3v2H4zM11.500 11.500h3v2h-3z" stroke="#aaa" />
    </NavTool>
  </div>
);

const Viewport = () => (
  <main className="relative min-h-0 flex-1 bg-[#fefefe]">
    <Model />
    <div className="relative grid h-full grid-cols-[1fr_auto_1fr] grid-rows-[minmax(0,1fr)]">
      <aside className="flex w-[300px] flex-col justify-between py-1 ml-1">
        <Navigator />
        <div className="flex h-[26px] items-center border border-t-0 border-[#dcdcdc] bg-[#f4f4f4] pl-[27px] pr-[11px]">
          <h2 className="flex-1 pt-px text-[12px]">COMENTÁRIOS</h2>
          <button aria-label="Adicionar comentário">
            <svg width="9" height="9" viewBox="0 0 9 9" stroke="#666" strokeWidth="2"><path d="M0 4.500h9M4.500 0v9" /></svg>
          </button>
        </div>
      </aside>
      <NavBar />
      <aside className="flex flex-col items-end">
        <ViewCube />
        <SketchPalette />
      </aside>
    </div>
  </main>
);

/* ---------- Timeline ---------- */

const featureIcons = {
  body: (
    <>
      <path d="m1.500 6 4-4.500h7L16.500 5v7.500L12 16.500H1.500z" fill="#cfd6e2" stroke="#444" strokeWidth="1.200" />
      <path d="m6 6 4-3M11 7v9M11 7l5-2" stroke="#8d95a5" />
      <path d="M11.500 7 16 5.500V12l-4.500 4z" fill="#a8b0c2" />
    </>
  ),
  joint: (
    <>
      <path d="M2 2.500c0-2 6-2 6 0v6c0 2-6 2-6 0zM10 9.500c0-2 6-2 6 0v5c0 2-6 2-6 0z" fill="#d9d9d9" stroke="#888" />
      <path d="M3.500 11v2.500H8m-2-2 2 2-2 2" stroke="#5b86d8" />
    </>
  ),
  move: (
    <path d="M9 2v14M2 9h14M6.500 4.500 9 2l2.500 2.500M6.500 13.500 9 16l2.500-2.500M4.500 6.500 2 9l2.500 2.500M13.500 6.500 16 9l-2.500 2.500" stroke="currentColor" strokeWidth="1.500" />
  ),
  rigid: (
    <>
      <path d="M6 9h6" stroke="#2e86bd" strokeWidth="1.500" />
      <path d="M2 9l5-3v6z" fill="#2e77b0" />
      <circle cx="12" cy="9" r="3.500" fill="#58a7e4" stroke="#3e88c0" />
    </>
  ),
  sketch: (
    <>
      <path d="M2.500 2.500h12v13h-12z" stroke="#777" strokeDasharray="3 1.500" />
      <path d="M1.500 1.500h2v2h-2zM13.500 1.500h2v2h-2zM1.500 14.500h2v2h-2z" fill="#2e77b0" />
      <path d="m9.500 16.500 1-3 5-4 2 2.500-5 4z" fill="#f2a124" />
      <path d="m14.500 9.500 1.500-1 2 2-1.500 1.500z" fill="#d94a4a" />
    </>
  ),
};

const features = [
  "body", "body", "joint", "move", "rigid", "rigid", "rigid", "move",
  "move", "sketch", "sketch", "move", "move", "move", "move",
];
const markerAt = 11;

const Timeline = () => (
  <footer className="flex h-11 shrink-0 items-start border-b border-[#1a1a1a] bg-[#f4f4f4]">
    <div className="flex h-12 w-[142px] items-center pl-[4px] text-[#777]">
      {[
        ["Ir para o início", "M1 2h2v12H1zM13 2v12L4 8z"],
        ["Voltar um passo", "M11 2v12L1 8zM12 5h2v6h-2z"],
        ["Reproduzir", "M2 0v16l12-8z"],
        ["Avançar um passo", "M5 2v12l10-6zM2 5h2v6H2z"],
        ["Ir para o fim", "M12 2h2v12h-2zM2 2v12l9-6z"],
      ].map(([label, d]) => (
        <button key={label} aria-label={label} className="flex w-[25px] justify-center"><Glyph><path d={d} /></Glyph></button>
      ))}
    </div>
    <div className="relative pt-3">
      <ol className="flex">
        {features.map((feature, i) => (
          <li key={i} className={`flex w-6 flex-col items-center ${i < markerAt ? "text-[#333]" : "text-[#c4c4c4]"}`}>
            <svg width="18" height="24" viewBox="0 -3 18 24" fill="none">{featureIcons[feature]}</svg>
            <span className="h-[5px] w-[2px] bg-[#c4c4c4]" />
          </li>
        ))}
      </ol>
      <div className="mx-[11px] h-[2px] bg-[#c4c4c4]" />
      <svg width="12" height="32" viewBox="0 0 12 32" className="absolute top-[10px] left-[258px]">
        <path d="M0 0h12v4L7 9v23H5V9L0 4z" fill="#333" />
      </svg>
    </div>
    <button aria-label="Preferências da linha do tempo" className="ml-auto flex h-12 items-center pr-[13px]"><GearIcon /></button>
  </footer>
);

export default function App() {
  return (
    <div className="flex h-screen flex-col overflow-hidden font-['Roboto','Liberation_Sans',sans-serif] text-[#3c3c3c]">
      <TitleBar />
      <QuickBar />
      <Ribbon />
      <Viewport />
      <Timeline />
    </div>
  );
}
